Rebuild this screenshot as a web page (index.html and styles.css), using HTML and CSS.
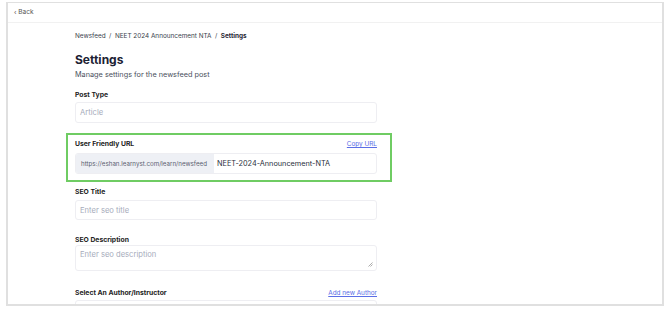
FILE: index.html
```html
<!DOCTYPE html>
<html lang="en">
<head>
  <meta charset="UTF-8" />
  <title>Settings</title>
  <link rel="stylesheet" href="styles.css">
</head>
<body>
  <div class="window">
    <header class="topbar">
      <a class="back" href="#">&lsaquo; Back</a>
    </header>

    <main class="content">
      <nav class="crumbs">
        <span>Newsfeed</span>
        <span class="sep">/</span>
        <span>NEET 2024 Announcement NTA</span>
        <span class="sep">/</span>
        <strong>Settings</strong>
      </nav>

      <h1>Settings</h1>
      <p class="sub">Manage settings for the newsfeed post</p>

      <div class="field post-type">
        <label>Post Type</label>
        <div class="input placeholder">Article</div>
      </div>

      <div class="field highlight">
        <div class="label-row">
          <label>User Friendly URL</label>
          <a href="#">Copy URL</a>
        </div>
        <div class="url-row">
          <span class="prefix">https://eshan.learnyst.com/learn/newsfeed</span>
          <span class="slug">NEET-2024-Announcement-NTA</span>
        </div>
      </div>

      <div class="field seo-title">
        <label>SEO Title</label>
        <div class="input placeholder">Enter seo title</div>
      </div>

      <div class="field seo-desc">
        <label>SEO Description</label>
        <div class="input textarea placeholder">
          Enter seo description
          <svg class="grip" width="5" height="5" viewBox="0 0 5 5"><path d="M4.5 0.5 L0.5 4.5 M4.5 2.5 L2.5 4.5" stroke="#888" stroke-width="0.7"/></svg>
        </div>
      </div>

      <div class="field author">
        <div class="label-row">
          <label>Select An Author/Instructor</label>
          <a href="#">Add new Author</a>
        </div>
        <div class="input placeholder">Select an author</div>
      </div>
    </main>
  </div>
</body>
</html>
```

FILE: styles.css
```css
* {
  box-sizing: border-box;
}

body {
  margin: 0;
  background: #fff;
  font-family: 'Inter', 'Noto Sans', sans-serif;
  font-size: 7px;
  line-height: 9px;
  color: #1f2433;
}

.window {
  margin: 2px 6px 0 6px;
  height: 304px;
  border: 2px solid #e0e0e0;
  border-top-width: 1px;
  overflow: hidden;
  background: #fff;
}

.topbar {
  height: 20px;
  border-bottom: 1px solid #f1f1f1;
  padding-left: 6px;
  display: flex;
  align-items: center;
}

.back {
  font-size: 6.5px;
  color: #555;
  text-decoration: none;
}

.content {
  width: 302px;
  margin-left: 67px;
  padding-top: 9px;
}

.crumbs {
  display: flex;
  gap: 3.5px;
  font-size: 6.4px;
  color: #3a3f4d;
}

.crumbs strong {
  font-weight: 700;
  color: #1f2433;
}

h1 {
  margin: 12px 0 0;
  font-size: 12px;
  line-height: 14px;
  font-weight: 700;
  color: #1c2233;
}

.sub {
  margin: 3px 0 0;
  font-size: 7.3px;
  color: #4a4f5c;
}

.field label {
  display: block;
  font-size: 6.8px;
  font-weight: 700;
  color: #222;
}

.post-type {
  margin-top: 11px;
}

.post-type label {
  margin-bottom: 3px;
}

.seo-title {
  margin-top: 5px;
}

.seo-title label {
  margin-bottom: 4px;
}

.seo-desc {
  margin-top: 15px;
}

.seo-desc label {
  margin-bottom: 1px;
}

.author {
  margin-top: 17px;
}

.author .label-row {
  margin-bottom: 2px;
}

.label-row {
  display: flex;
  justify-content: space-between;
  align-items: baseline;
}

.label-row a {
  font-size: 6.4px;
  color: #5b6ee6;
  text-decoration: underline;
}

.input {
  height: 21px;
  border: 1px solid #eeeef2;
  border-radius: 3px;
  padding: 0 4px;
  display: flex;
  align-items: center;
  font-size: 7.6px;
}

.seo-title .input {
  height: 20px;
}

.placeholder {
  color: #a6abbb;
}

.textarea {
  position: relative;
  height: 26px;
  align-items: flex-start;
  padding-top: 4px;
}

.grip {
  position: absolute;
  right: 3px;
  bottom: 3px;
}

.highlight {
  margin: 10px -15px 0 -9px;
  padding: 4px 13px 6px 7px;
  border: 2px solid #6fcc63;
}

.highlight .label-row {
  margin-bottom: 4px;
}

.url-row {
  display: flex;
  height: 21px;
  border: 1px solid #eeeef2;
  border-radius: 3px;
  overflow: hidden;
}

.prefix {
  width: 138px;
  background: #eef0f5;
  font-size: 6.2px;
  color: #5b6070;
  display: flex;
  align-items: center;
  padding-left: 5px;
}

.slug {
  display: flex;
  align-items: center;
  padding-left: 3px;
  font-size: 7.3px;
  color: #2a2f3c;
}
```
